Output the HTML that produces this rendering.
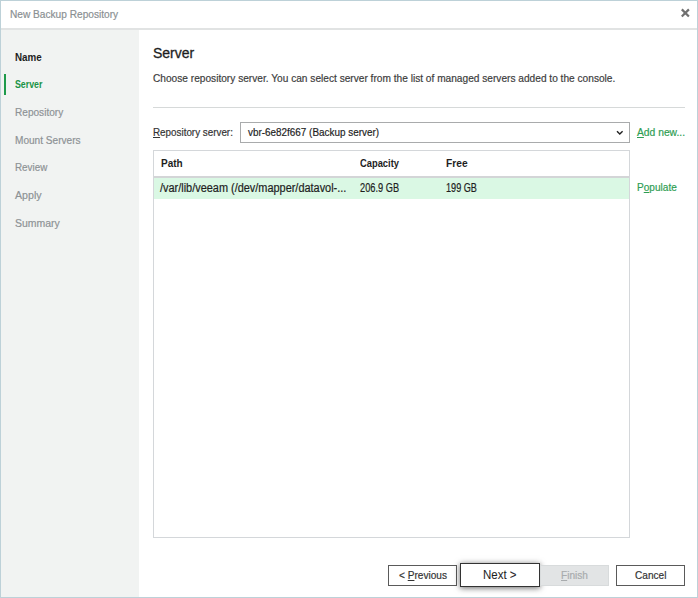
<!DOCTYPE html>
<html><head><meta charset="utf-8">
<style>
html,body{margin:0;padding:0;width:698px;height:598px;overflow:hidden;background:#fff}
body{position:relative;font-family:"Liberation Sans",sans-serif}
.a{position:absolute}
.t{position:absolute;white-space:nowrap;line-height:12px;font-size:12px;transform-origin:0 0;-webkit-text-stroke:0.2px currentColor}
.u{text-decoration:underline;text-underline-offset:1px}
</style></head><body>
<!-- window border -->
<div class="a" style="left:0;top:0;width:696px;height:596px;border:1px solid #bdd1d8"></div>
<!-- title -->
<div class="t" style="left:10px;top:8px;font-size:11.5px;color:#8a8f92;transform:scaleX(.881)">New Backup Repository</div>
<svg class="a" style="left:680px;top:8px" width="11" height="11" viewBox="0 0 11 11"><path d="M1.8 1.4L8.9 8.5M8.9 1.4L1.8 8.5" stroke="#707070" stroke-width="2.2"/></svg>
<div class="a" style="left:1px;top:28px;width:696px;height:2px;background:#e1e3e3"></div>
<!-- left panel -->
<div class="a" style="left:1px;top:30px;width:138px;height:567px;background:#f1f3f2"></div>
<div class="a" style="left:4px;top:74px;width:2px;height:21px;background:#1e9a4a"></div>
<div class="t" style="left:15px;top:51px;font-size:11px;font-weight:bold;-webkit-text-stroke:0;color:#1e1e1e;transform:scaleX(.894)">Name</div>
<div class="t" style="left:15px;top:78px;font-size:11px;font-weight:bold;-webkit-text-stroke:0;color:#1a9447;transform:scaleX(.8)">Server</div>
<div class="t" style="left:15px;top:106px;font-size:11.5px;color:#8d9295;transform:scaleX(.877)">Repository</div>
<div class="t" style="left:15px;top:134px;font-size:11.5px;color:#8d9295;transform:scaleX(.877)">Mount Servers</div>
<div class="t" style="left:15px;top:161px;font-size:11.5px;color:#8d9295;transform:scaleX(.855)">Review</div>
<div class="t" style="left:15px;top:189px;font-size:11.5px;color:#8d9295;transform:scaleX(.925)">Apply</div>
<div class="t" style="left:15px;top:217px;font-size:11.5px;color:#8d9295;transform:scaleX(.91)">Summary</div>
<!-- content -->
<div class="t" style="left:153px;top:46px;font-size:14px;line-height:14px;color:#1e1e1e;-webkit-text-stroke:0.3px">Server</div>
<div class="t" style="left:153px;top:72px;font-size:11.5px;color:#3c3c3c;transform:scaleX(.882)">Choose repository server. You can select server from the list of managed servers added to the console.</div>
<div class="a" style="left:153px;top:107px;width:532px;height:1px;background:#d6d9d9"></div>
<div class="t" style="left:153px;top:126px;font-size:11.5px;color:#333;transform:scaleX(.856)"><span class="u">R</span>epository server:</div>
<div class="a" style="left:240px;top:122px;width:388px;height:19px;border:1px solid #a9abac;background:#fff"></div>
<div class="t" style="left:248px;top:126px;font-size:11.5px;color:#1e1e1e;transform:scaleX(.861)">vbr-6e82f667 (Backup server)</div>
<svg class="a" style="left:615px;top:129px" width="9" height="7" viewBox="0 0 9 7"><path d="M2 2.2L4.8 5L7.6 2.2" fill="none" stroke="#222" stroke-width="1.4"/></svg>
<div class="t" style="left:637px;top:126px;font-size:11.5px;color:#2e9d52;transform:scaleX(.895)"><span class="u">A</span>dd new...</div>
<!-- table -->
<div class="a" style="left:153px;top:150px;width:475px;height:386px;border:1px solid #d4d7da;background:#fff"></div>
<div class="a" style="left:154px;top:176px;width:475px;height:2px;background:#d3d5d7"></div>
<div class="a" style="left:154px;top:178px;width:475px;height:21px;background:#daf8e4"></div>
<div class="t" style="left:161px;top:157px;font-size:11px;font-weight:bold;-webkit-text-stroke:0;color:#1e1e1e;transform:scaleX(.91)">Path</div>
<div class="t" style="left:360px;top:157px;font-size:11px;font-weight:bold;-webkit-text-stroke:0;color:#1e1e1e;transform:scaleX(.85)">Capacity</div>
<div class="t" style="left:446px;top:157px;font-size:11px;font-weight:bold;-webkit-text-stroke:0;color:#1e1e1e;transform:scaleX(.93)">Free</div>
<div class="t" style="left:160px;top:182px;color:#1e1e1e;transform:scaleX(.91)">/var/lib/veeam (/dev/mapper/datavol-...</div>
<div class="t" style="left:360px;top:182px;color:#1e1e1e;transform:scaleX(.77)">206.9 GB</div>
<div class="t" style="left:446px;top:182px;color:#1e1e1e;transform:scaleX(.76)">199 GB</div>
<div class="t" style="left:637px;top:181px;font-size:11.5px;color:#2e9d52;transform:scaleX(.877)">P<span class="u">o</span>pulate</div>
<!-- buttons -->
<div class="a" style="left:388px;top:565px;width:67px;height:19px;border:1px solid #5a5a5a;background:#fff"></div>
<div class="t" style="left:399px;top:569px;font-size:11.5px;color:#333;transform:scaleX(.877)">&lt; <span class="u">P</span>revious</div>
<div class="a" style="left:460px;top:563px;width:78px;height:22px;border:1px solid #333;background:#fff;box-shadow:0 1px 6px rgba(0,0,0,.6)"></div>
<div class="t" style="left:483px;top:569px;font-size:12px;color:#1e1e1e;-webkit-text-stroke:0.05px;transform:scaleX(.959)">Next &gt;</div>
<div class="a" style="left:540px;top:565px;width:67px;height:19px;border:1px solid #d8dbdc;background:#e2e4e5"></div>
<div class="t" style="left:561px;top:569px;font-size:11.5px;color:#a8abad;transform:scaleX(.877)"><span class="u">F</span>inish</div>
<div class="a" style="left:616px;top:565px;width:67px;height:19px;border:1px solid #5a5a5a;background:#fff"></div>
<div class="t" style="left:635px;top:569px;font-size:11.5px;color:#333;transform:scaleX(.877)">Cancel</div>
</body></html>
